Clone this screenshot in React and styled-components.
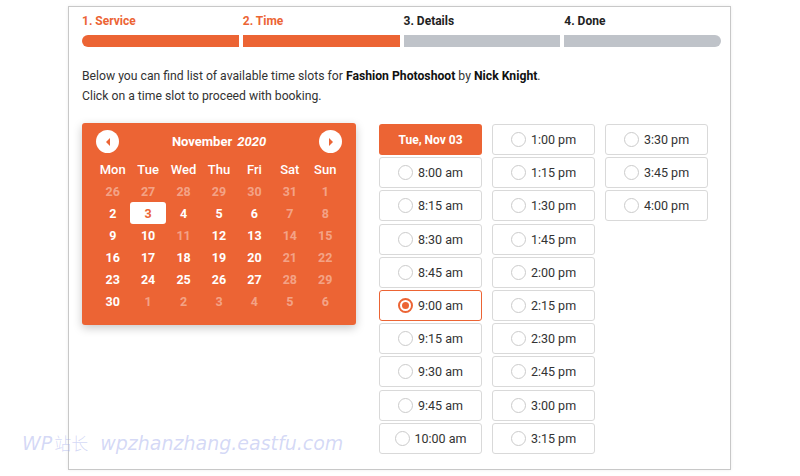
import React from "react";
import styled, { createGlobalStyle, css } from "styled-components";

const ORANGE = "#ec6434";

const Global = createGlobalStyle`
  html, body { margin: 0; padding: 0; background: #fff; }
  body { font-family: Roboto, "Noto Sans", Arial, sans-serif; color: #333; }
  * { box-sizing: border-box; }
`;

const Page = styled.div`
  position: relative;
  width: 800px;
  height: 476px;
  overflow: hidden;
  padding: 6px 0 0 68px;
`;

const Frame = styled.div`
  width: 663px;
  height: 464px;
  border: 1px solid #c8c8c8;
  box-shadow: 0 0 3px rgba(0, 0, 0, 0.08);
  padding: 6px 9px 0 13px;
  background: #fff;
`;

const Steps = styled.div`
  display: grid;
  grid-template-columns: repeat(4, 1fr);
  column-gap: 4px;
`;

const Step = styled.div`
  display: flex;
  flex-direction: column;
`;

const StepLabel = styled.div`
  font-size: 12px;
  font-weight: 700;
  line-height: 16px;
  height: 16px;
  color: ${(p) => (p.$active ? ORANGE : "#222")};
`;

const StepBar = styled.div`
  margin-top: 6px;
  height: 12px;
  background: ${(p) => (p.$active ? ORANGE : "#bfc3c9")};
  border-radius: ${(p) =>
    p.$pos === "first" ? "6px 0 0 6px" : p.$pos === "last" ? "0 6px 6px 0" : "0"};
`;

const Intro = styled.div`
  margin-top: 19px;
  font-size: 12.2px;
  line-height: 20px;
  color: #333;
  b { color: #111; font-weight: 700; }
`;

const Content = styled.div`
  margin-top: 17px;
  display: flex;
  align-items: flex-start;
  gap: 23px;
`;

const Calendar = styled.div`
  width: 274px;
  height: 202px;
  background: ${ORANGE};
  border-radius: 3px;
  box-shadow: 0 3px 10px rgba(0, 0, 0, 0.22);
  padding: 7px 13px 0 13px;
  color: #fff;
`;

const CalHeader = styled.div`
  display: flex;
  align-items: center;
  justify-content: space-between;
  height: 23px;
  padding: 0 1px;
  margin-bottom: 5px;
`;

const NavBtn = styled.div`
  width: 23px;
  height: 23px;
  border-radius: 50%;
  background: #fff;
  display: flex;
  align-items: center;
  justify-content: center;
`;

const MonthTitle = styled.div`
  font-size: 13px;
  font-weight: 700;
  i { margin-left: 5px; font-style: italic; }
`;

const Grid = styled.div`
  display: grid;
  grid-template-columns: repeat(7, 1fr);
  grid-auto-rows: 22px;
`;

const DayName = styled.div`
  display: flex;
  align-items: center;
  justify-content: center;
  font-size: 13px;
  font-weight: 500;
`;

const Day = styled.div`
  display: flex;
  align-items: center;
  justify-content: center;
  font-size: 12.5px;
  font-weight: 700;
  border-radius: 3px;
  color: ${(p) => (p.$faded ? "rgba(255,255,255,0.42)" : "#fff")};
  ${(p) =>
    p.$selected &&
    css`
      background: #fff;
      color: ${ORANGE};
    `}
`;

const Slots = styled.div`
  display: flex;
  gap: 10px;
  margin-top: 1px;
`;

const SlotCol = styled.div`
  width: 103px;
  display: flex;
  flex-direction: column;
  gap: 2.2px;
`;

const SlotHeader = styled.div`
  height: 31px;
  border-radius: 3px;
  background: ${ORANGE};
  color: #fff;
  font-weight: 700;
  font-size: 12px;
  display: flex;
  align-items: center;
  justify-content: center;
`;

const Slot = styled.div`
  height: 31px;
  border-radius: 3px;
  border: ${(p) => (p.$checked ? `1.5px solid ${ORANGE}` : "1px solid #d9d9d9")};
  display: flex;
  align-items: center;
  justify-content: center;
  gap: 5px;
  font-size: 12.5px;
  color: #333;
  background: #fff;
`;

const Radio = styled.span`
  width: 15px;
  height: 15px;
  border-radius: 50%;
  border: ${(p) => (p.$checked ? `2px solid ${ORANGE}` : "1px solid #cbcbcb")};
  display: flex;
  align-items: center;
  justify-content: center;
  &::after {
    content: "";
    display: ${(p) => (p.$checked ? "block" : "none")};
    width: 7px;
    height: 7px;
    border-radius: 50%;
    background: ${ORANGE};
  }
`;

const Watermark = styled.div`
  position: absolute;
  left: 22px;
  top: 430px;
  display: flex;
  align-items: baseline;
  font-family: "DejaVu Sans", "Noto Sans CJK SC", sans-serif;
  font-style: italic;
  font-weight: 300;
  font-size: 19px;
  color: rgba(160, 170, 235, 0.45);
  white-space: nowrap;
`;

const WmCjk = styled.span`
  font-family: "Noto Sans CJK SC", sans-serif;
  font-style: normal;
  font-weight: 300;
  font-size: 17px;
  margin: 0 12px 0 2px;
`;

const steps = [
  { label: "1. Service", active: true },
  { label: "2. Time", active: true },
  { label: "3. Details", active: false },
  { label: "4. Done", active: false },
];

const dayNames = ["Mon", "Tue", "Wed", "Thu", "Fri", "Sat", "Sun"];

const days = [
  [26, 1], [27, 1], [28, 1], [29, 1], [30, 1], [31, 1], [1, 1],
  [2, 0], [3, 0, 1], [4, 0], [5, 0], [6, 0], [7, 1], [8, 1],
  [9, 0], [10, 0], [11, 1], [12, 0], [13, 0], [14, 1], [15, 1],
  [16, 0], [17, 0], [18, 0], [19, 0], [20, 0], [21, 1], [22, 1],
  [23, 0], [24, 0], [25, 0], [26, 0], [27, 0], [28, 1], [29, 1],
  [30, 0], [1, 1], [2, 1], [3, 1], [4, 1], [5, 1], [6, 1],
];

const col1 = ["8:00 am", "8:15 am", "8:30 am", "8:45 am", "9:00 am", "9:15 am", "9:30 am", "9:45 am", "10:00 am"];
const col2 = ["1:00 pm", "1:15 pm", "1:30 pm", "1:45 pm", "2:00 pm", "2:15 pm", "2:30 pm", "2:45 pm", "3:00 pm", "3:15 pm"];
const col3 = ["3:30 pm", "3:45 pm", "4:00 pm"];

const Arrow = ({ dir }) => (
  <svg width="8" height="10" viewBox="0 0 8 10">
    {dir === "left" ? (
      <path d="M6 1 L2 5 L6 9 Z" fill={ORANGE} />
    ) : (
      <path d="M2 1 L6 5 L2 9 Z" fill={ORANGE} />
    )}
  </svg>
);

const SlotItem = ({ t }) => {
  const checked = t === "9:00 am";
  return (
    <Slot $checked={checked}>
      <Radio $checked={checked} />
      {t}
    </Slot>
  );
};

export default function App() {
  return (
    <Page>
      <Global />
      <Frame>
        <Steps>
          {steps.map((s, i) => (
            <Step key={s.label}>
              <StepLabel $active={s.active}>{s.label}</StepLabel>
              <StepBar
                $active={s.active}
                $pos={i === 0 ? "first" : i === steps.length - 1 ? "last" : "mid"}
              />
            </Step>
          ))}
        </Steps>
        <Intro>
          Below you can find list of available time slots for <b>Fashion Photoshoot</b> by{" "}
          <b>Nick Knight</b>.
          <br />
          Click on a time slot to proceed with booking.
        </Intro>
        <Content>
          <Calendar>
            <CalHeader>
              <NavBtn><Arrow dir="left" /></NavBtn>
              <MonthTitle>
                November<i>2020</i>
              </MonthTitle>
              <NavBtn><Arrow dir="right" /></NavBtn>
            </CalHeader>
            <Grid>
              {dayNames.map((d) => (
                <DayName key={d}>{d}</DayName>
              ))}
              {days.map(([n, f, sel], i) => (
                <Day key={i} $faded={!!f} $selected={!!sel}>
                  {n}
                </Day>
              ))}
            </Grid>
          </Calendar>
          <Slots>
            <SlotCol>
              <SlotHeader>Tue, Nov 03</SlotHeader>
              {col1.map((t) => (
                <SlotItem key={t} t={t} />
              ))}
            </SlotCol>
            <SlotCol>
              {col2.map((t) => (
                <SlotItem key={t} t={t} />
              ))}
            </SlotCol>
            <SlotCol>
              {col3.map((t) => (
                <SlotItem key={t} t={t} />
              ))}
            </SlotCol>
          </Slots>
        </Content>
      </Frame>
      <Watermark>
        WP<WmCjk>站长</WmCjk>wpzhanzhang.eastfu.com
      </Watermark>
    </Page>
  );
}
